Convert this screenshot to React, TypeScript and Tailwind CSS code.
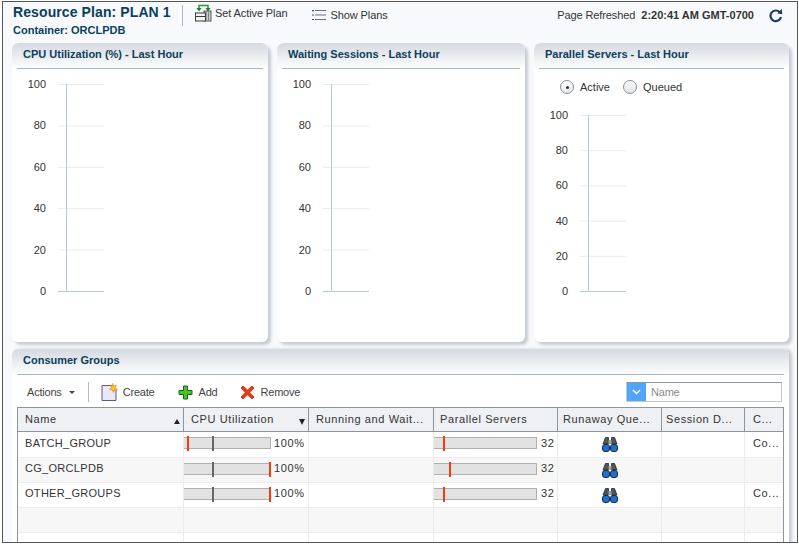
const navy = "text-[#0b3f5c]";

function SetActiveIcon() {
  return (
    <svg width="17" height="18" viewBox="0 0 17 18">
      <path d="M4 4V1.500h9V4" fill="none" stroke="#2f9a2f" strokeWidth="1.500" />
      <path d="M1.500 4h5L4 7.500zM10.500 4h5L13 7.500z" fill="#1f7f1f" />
      <rect x="9" y="7" width="7" height="10" fill="#c9ccd0" stroke="#55585c" />
      <path d="M11 8v8M13.500 8v8" stroke="#7d8186" />
      <rect x="0.500" y="9" width="10" height="8" fill="#f3f3f3" stroke="#3a3a3a" />
      <path d="M1 12.500h9" stroke="#3a3a3a" />
    </svg>
  );
}

function ListIcon() {
  return (
    <svg width="14" height="12" viewBox="0 0 14 12">
      <path d="M3 1.500h11M3 6h11M3 10.500h11" stroke="#6d7378" strokeWidth="1.200" />
      <path d="M0 1h2v1.200H0zM0 5.400h2v1.200H0zM0 9.900h2v1.200H0z" fill="#2a5a86" />
    </svg>
  );
}

function RefreshIcon() {
  return (
    <svg width="14" height="15" viewBox="0 0 14 15">
      <path d="M10.800 4.300A5.300 5.300 0 1 0 12 9" fill="none" stroke="#1f3f66" strokeWidth="2.200" />
      <path d="M8.300 5.600 13.300 6.300 12.700 0.800z" fill="#1f3f66" />
    </svg>
  );
}

function CreateIcon() {
  return (
    <svg width="17" height="18" viewBox="0 0 17 18">
      <path d="M1 2.500h10l4 4v11H1z" fill="#e9e9f6" stroke="#5a5a8a" />
      <path d="M11.500 0.500l1.200 2.500 2.700-.8-1 2.600 2 1.800-2.800.3-1.200 2.600-1.200-2.600-2.800-.3 2-1.800-1-2.600 2.700.8z" fill="#fbc81a" stroke="#d8801a" strokeWidth="0.600" />
    </svg>
  );
}

function AddIcon() {
  return (
    <svg width="15" height="15" viewBox="0 0 15 15">
      <path d="M5.500 1h4v4.500H14v4H9.500V14h-4V9.500H1v-4h4.500z" fill="#4cc22c" stroke="#14651a" />
    </svg>
  );
}

function RemoveIcon() {
  return (
    <svg width="15" height="15" viewBox="0 0 15 15">
      <path d="M3 1l4.500 4L12 1l2 2-4.200 4.500L14 12l-2 2-4.500-4.200L3 14l-2-2 4.200-4.500L1 3z" fill="#ee3a14" stroke="#a8391d" strokeWidth="0.800" />
    </svg>
  );
}

function Binoculars() {
  return (
    <svg width="16" height="15" viewBox="0 0 16 15">
      <path d="M3.500 0.500h3V7H1zM9.500 0.500h3L15 7H9.500z" fill="#50555b" stroke="#26292d" strokeWidth="0.800" />
      <rect x="6.500" y="3" width="3" height="4" fill="#a3a8ae" />
      <rect x="0.500" y="7.500" width="7" height="7" rx="2.500" fill="#1d6fd8" stroke="#1c2a3a" />
      <rect x="8.500" y="7.500" width="7" height="7" rx="2.500" fill="#1d6fd8" stroke="#1c2a3a" />
    </svg>
  );
}

type ChartProps = { labels: number[]; top: number; step: number; axis: number; height: number };

function Chart({ labels, top, step, axis, height }: ChartProps) {
  const bottom = top + step * (labels.length - 1);
  return (
    <svg width="100%" height={height} className="block">
      {labels.map((l, i) => (
        <g key={l}>
          <text x={axis - 20} y={top + step * i + 4} textAnchor="end" fontSize="11" fill="#333">
            {l}
          </text>
          <line x1={axis - 8} x2={axis + 38} y1={top + step * i + 0.5} y2={top + step * i + 0.5} stroke={i === labels.length - 1 ? "#b4c8d8" : "#e6ecf1"} />
        </g>
      ))}
      <line x1={axis + 0.5} x2={axis + 0.5} y1={top} y2={bottom} stroke="#b4c8d8" />
    </svg>
  );
}

function PanelTitle({ title }: { title: string }) {
  return (
    <div className="h-[26px] rounded-t-md bg-gradient-to-b from-[#d5d9e0] to-white px-[5px]">
      <div className={`h-[26px] border-b border-[#a9b4c4] pl-[6px] pt-[4px] text-[11px] font-bold leading-[14px] ${navy}`}>
        {title}
      </div>
    </div>
  );
}

function Panel({ title, width, children }: { title: string; width: string; children: React.ReactNode }) {
  return (
    <div className={`${width} h-[299px] shrink-0 overflow-hidden rounded-md bg-white shadow-[3px_3px_3px_#c8cdd4]`}>
      <PanelTitle title={title} />
      {children}
    </div>
  );
}

function Bar({ width, red, dark, label, gap }: { width: string; red: string; dark?: string; label: string; gap: string }) {
  return (
    <div className="flex h-full items-center pb-[3px]">
      <div className={`relative h-[12px] ${width} border-y border-r border-[#b0b0b0] bg-[#e2e2e2]`}>
        {dark && <div className={`absolute top-[-2px] h-[15px] w-[2px] bg-[#666] ${dark}`} />}
        <div className={`absolute top-[-2px] h-[15px] w-[2px] bg-[#f03c10] ${red}`} />
      </div>
      <span className={`${gap} tracking-[0.6px]`}>{label}</span>
    </div>
  );
}

const cols = "grid grid-cols-[166px_125px_125px_124px_104px_83px_38px]";

const rows = [
  { name: "BATCH_GROUP", cpu: "left-[3px]", par: "left-[9px]", c: "Co...", h: "h-[26px]" },
  { name: "CG_ORCLPDB", cpu: "left-[85px]", par: "left-[15px]", c: "", h: "h-[25px]" },
  { name: "OTHER_GROUPS", cpu: "left-[85px]", par: "left-[9px]", c: "Co...", h: "h-[25px]" },
];

const headers = [
  { label: "Name", pad: "pl-[7px]" },
  { label: "CPU Utilization", pad: "pl-[7px]" },
  { label: "Running and Wait...", pad: "pl-[7px]" },
  { label: "Parallel Servers", pad: "pl-[6px]" },
  { label: "Runaway Que...", pad: "pl-[5px]" },
  { label: "Session D...", pad: "pl-[4px]" },
  { label: "C...", pad: "pl-[8px]" },
];

export default function App() {
  return (
    <div className="h-[544px] w-[799px] overflow-hidden bg-white pb-[1px] pl-[2px] pr-[1px] pt-[1px] font-['Liberation_Sans',Arial,sans-serif]">
      <div className="h-full overflow-hidden border border-[#555] bg-[#f7f9fc]">
        {/* Top bar */}
        <div className="flex h-[41px] items-start text-[11px] tracking-[-0.1px] text-[#333]">
          <div className="w-[179px] whitespace-nowrap pl-[10px] tracking-normal">
            <div className={`pt-[1px] text-[14px] font-bold leading-[18px] tracking-[0.1px] ${navy}`}>Resource Plan: PLAN 1</div>
            <div className={`mt-[2px] text-[11px] font-bold leading-[14px] ${navy}`}>Container: ORCLPDB</div>
          </div>
          <div className="mt-[3px] h-[21px] w-px bg-[#a9b4c4]" />
          <div className="ml-[12px] mt-[2px] flex items-center gap-[3px]">
            <SetActiveIcon />
            <span>Set Active Plan</span>
          </div>
          <div className="ml-[24px] mt-[5px] flex items-center gap-[5px]">
            <ListIcon />
            <span>Show Plans</span>
          </div>
          <div className="ml-auto mt-[5px] flex items-center">
            <span>Page Refreshed</span>
            <span className="ml-[6px] font-bold tracking-normal">2:20:41 AM GMT-0700</span>
            <span className="ml-[15px] mr-[14px]"><RefreshIcon /></span>
          </div>
        </div>

        {/* Charts */}
        <div className="flex gap-[9px] pl-[9px]">
          <Panel title="CPU Utilization (%) - Last Hour" width="w-[256px]">
            <Chart labels={[100, 80, 60, 40, 20, 0]} top={15} step={41.4} axis={54} height={273} />
          </Panel>
          <Panel title="Waiting Sessions - Last Hour" width="w-[248px]">
            <Chart labels={[100, 80, 60, 40, 20, 0]} top={15} step={41.4} axis={54} height={273} />
          </Panel>
          <Panel title="Parallel Servers - Last Hour" width="w-[255px]">
            <div className="flex h-[36px] items-center text-[11px] text-[#333]">
              <span className="ml-[26px] flex h-[14px] w-[14px] items-center justify-center rounded-full border border-[#8a8f95] bg-gradient-to-b from-white to-[#e6e8ec]">
                <span className="h-[3px] w-[3px] rounded-full bg-[#333]" />
              </span>
              <span className="ml-[6px]">Active</span>
              <span className="ml-[13px] h-[14px] w-[14px] rounded-full border border-[#8a8f95] bg-gradient-to-b from-white to-[#e0e2e6]" />
              <span className="ml-[6px]">Queued</span>
            </div>
            <Chart labels={[100, 80, 60, 40, 20, 0]} top={10} step={35.2} axis={54} height={230} />
          </Panel>
        </div>

        {/* Consumer groups */}
        <div className="ml-[9px] mt-[7px] h-[200px] w-[777px] rounded-t-md bg-white shadow-[3px_0_3px_#c8cdd4]">
          <PanelTitle title="Consumer Groups" />
          <div className="flex h-[32px] items-center px-[15px] pt-[2px] text-[11px] tracking-[-0.2px] text-[#444]">
            <span>Actions</span>
            <span className="ml-[7px] h-0 w-0 border-x-[3px] border-t-[3px] border-x-transparent border-t-[#444]" />
            <span className="ml-[13px] h-[20px] w-px bg-[#b5bcc6]" />
            <span className="ml-[12px]"><CreateIcon /></span>
            <span className="ml-[5px]">Create</span>
            <span className="ml-[23px]"><AddIcon /></span>
            <span className="ml-[6px]">Add</span>
            <span className="ml-[22px]"><RemoveIcon /></span>
            <span className="ml-[6px]">Remove</span>
            <div className="ml-auto mr-[-8px] flex h-[20px] w-[156px] items-center border border-[#c4c9d0] border-t-[#8f959c] bg-white">
              <span className="flex h-full w-[19px] items-center justify-center bg-[#4ea5fb]">
                <svg width="9" height="6" viewBox="0 0 9 6"><path d="M1 1l3.500 3.500L8 1" fill="none" stroke="#fff" strokeWidth="1.500" /></svg>
              </span>
              <span className="ml-[5px] text-[#8a8a8a]">Name</span>
            </div>
          </div>

          {/* Table */}
          <div className="mx-[5px] border-x border-t border-[#8f959c] text-[11px] text-[#333]">
            <div className={`${cols} h-[24px] border-b border-[#8f959c] bg-[#eff0f4] tracking-[0.6px]`}>
              {headers.map((h, i) => (
                <div key={h.label} className={`relative flex items-center border-[#8f959c] ${i < 6 ? "border-r" : ""} ${h.pad}`}>
                  {h.label}
                  {i === 0 && <span className="absolute right-[3px] top-[11px] h-0 w-0 border-x-[3px] border-b-[5px] border-x-transparent border-b-[#222]" />}
                  {i === 1 && <span className="absolute right-[3px] top-[11px] h-0 w-0 border-x-[3px] border-t-[6px] border-x-transparent border-t-[#222]" />}
                </div>
              ))}
            </div>
            {rows.map((r, i) => (
              <div key={r.name} className={`${cols} ${r.h} border-b border-[#ececec] ${i === 1 ? "bg-[#f7f7f7]" : "bg-white"}`}>
                <div className="flex items-center border-r border-[#ececec] pb-[3px] pl-[7px] tracking-[0.3px]">{r.name}</div>
                <div className="border-r border-[#ececec]">
                  <Bar width="w-[87px]" red={r.cpu} dark="left-[28px]" label="100%" gap="ml-[3px]" />
                </div>
                <div className="border-r border-[#ececec]" />
                <div className="border-r border-[#ececec]">
                  <Bar width="w-[103px]" red={r.par} label="32" gap="ml-[4px]" />
                </div>
                <div className="flex items-center justify-center border-r border-[#ececec]"><Binoculars /></div>
                <div className="border-r border-[#ececec]" />
                <div className="flex items-center pb-[3px] pl-[8px] tracking-[0.6px]">{r.c}</div>
              </div>
            ))}
            <div className={`${cols} h-[25px] border-b border-[#ececec] bg-[#f7f7f7]`}>
              {headers.map((h, i) => <div key={h.label} className={i < 6 ? "border-r border-[#ececec]" : ""} />)}
            </div>
            <div className={`${cols} h-[25px] bg-white`}>
              {headers.map((h, i) => <div key={h.label} className={i < 6 ? "border-r border-[#ececec]" : ""} />)}
            </div>
          </div>
        </div>
      </div>
    </div>
  );
}
